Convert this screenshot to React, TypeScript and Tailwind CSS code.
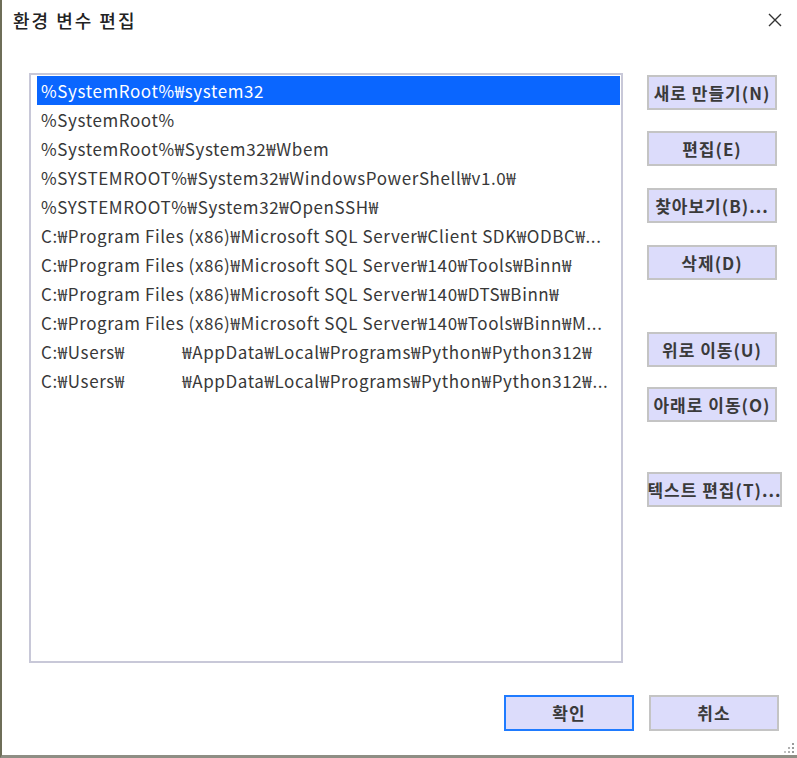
import React from 'react';

const FONT = { fontFamily: '"Noto Sans CJK KR", "Noto Sans", sans-serif' };

const paths = [
  '%SystemRoot%₩system32',
  '%SystemRoot%',
  '%SystemRoot%₩System32₩Wbem',
  '%SYSTEMROOT%₩System32₩WindowsPowerShell₩v1.0₩',
  '%SYSTEMROOT%₩System32₩OpenSSH₩',
  'C:₩Program Files (x86)₩Microsoft SQL Server₩Client SDK₩ODBC₩...',
  'C:₩Program Files (x86)₩Microsoft SQL Server₩140₩Tools₩Binn₩',
  'C:₩Program Files (x86)₩Microsoft SQL Server₩140₩DTS₩Binn₩',
  'C:₩Program Files (x86)₩Microsoft SQL Server₩140₩Tools₩Binn₩M...',
  'C:₩Users₩             ₩AppData₩Local₩Programs₩Python₩Python312₩',
  'C:₩Users₩             ₩AppData₩Local₩Programs₩Python₩Python312₩...',
];

const sideButtons = [
  { label: '새로 만들기(N)', mt: 'mt-[2px]', w: 'w-[130px]' },
  { label: '편집(E)', mt: 'mt-[21px]', w: 'w-[130px]' },
  { label: '찾아보기(B)...', mt: 'mt-[22px]', w: 'w-[130px]' },
  { label: '삭제(D)', mt: 'mt-[22px]', w: 'w-[130px]' },
  { label: '위로 이동(U)', mt: 'mt-[52px]', w: 'w-[130px]' },
  { label: '아래로 이동(O)', mt: 'mt-[20px]', w: 'w-[130px]' },
  { label: '텍스트 편집(T)...', mt: 'mt-[50px]', w: 'w-[135px]' },
];

const EnvEditDialog: React.FC = () => {
  return (
    <div
      className="w-[797px] h-[758px] bg-white border-l-2 border-l-[#6e6e58] border-b-[3px] border-b-[#8e8e84] flex flex-col relative overflow-hidden"
      style={FONT}
    >
      {/* title bar */}
      <header className="h-[40px] flex items-center justify-between pl-[11px] pr-[14px]">
        <h1 className="text-[18px] font-medium text-[#222] tracking-[2px]">환경 변수 편집</h1>
        <svg width="16" height="16" viewBox="0 0 16 16" className="text-[#333]">
          <path d="M2 2 L14 14 M14 2 L2 14" stroke="currentColor" strokeWidth="1.4" />
        </svg>
      </header>

      <main className="flex pt-[33px] pl-[27px]">
        <ul className="w-[594px] h-[590px] border-2 border-[#c8c8d8] pt-[1px] pl-[6px] pr-[1px]">
          {paths.map((p, i) => (
            <li
              key={i}
              className={
                'h-[29px] leading-[29px] px-[4px] text-[17px] tracking-[0.6px] whitespace-pre overflow-hidden ' +
                (i === 0 ? 'bg-[#0a66ff] text-white' : 'text-[#383838]')
              }
            >
              {p}
            </li>
          ))}
        </ul>

        <div className="flex flex-col ml-[24px]">
          {sideButtons.map((b) => (
            <button
              key={b.label}
              className={`${b.mt} ${b.w} h-[35px] bg-[#dcdcfb] border-2 border-[#c4c4c4] text-[17px] tracking-[1px] font-bold text-[#3a3a3a] whitespace-nowrap flex items-center justify-center`}
            >
              {b.label}
            </button>
          ))}
        </div>
      </main>

      <footer className="flex justify-end gap-[15px] pr-[18px] mt-[32px]">
        <button className="w-[130px] h-[36px] bg-[#dcdcfb] border-2 border-[#1f7bff] text-[17px] tracking-[1px] font-bold text-[#3a3a3a]">
          확인
        </button>
        <button className="w-[130px] h-[36px] bg-[#dcdcfb] border-2 border-[#c4c4c4] text-[17px] tracking-[1px] font-bold text-[#3a3a3a]">
          취소
        </button>
      </footer>

      {/* resize grip */}
      <svg width="12" height="12" viewBox="0 0 12 12" className="absolute right-[2px] bottom-[1px]">
        <rect x="9" y="1" width="2" height="2" fill="#9a9a9a" />
        <rect x="9" y="5" width="2" height="2" fill="#9a9a9a" />
        <rect x="9" y="9" width="2" height="2" fill="#9a9a9a" />
        <rect x="5" y="5" width="2" height="2" fill="#b0b0b0" />
        <rect x="5" y="9" width="2" height="2" fill="#b0b0b0" />
        <rect x="1" y="9" width="2" height="2" fill="#c4c4c4" />
      </svg>
    </div>
  );
};

export default function App() {
  return <EnvEditDialog />;
}
